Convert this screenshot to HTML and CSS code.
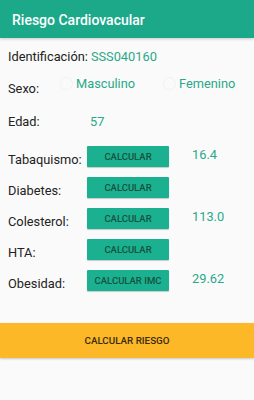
FILE: index.html
```html
<!DOCTYPE html>
<html lang="es">
  <head>
    <meta charset="UTF-8" />
    <title>Riesgo Cardiovacular</title>
    <link rel="stylesheet" href="styles.css">
  </head>
  <body>
    <div class="toolbar">Riesgo Cardiovacular</div>

    <div class="form">
      <div class="row row-id">
        <span class="label">Identificación:</span>
        <span class="value">SSS040160</span>
      </div>
      <div class="row row-sexo">
        <span class="label">Sexo:</span>
        <span class="radio"><span class="dot"></span>Masculino</span>
        <span class="radio"><span class="dot"></span>Femenino</span>
      </div>
      <div class="row row-edad">
        <span class="label">Edad:</span>
        <span class="value">57</span>
      </div>
      <div class="row row-btn row-first">
        <span class="label">Tabaquismo:</span>
        <button class="calc-btn">CALCULAR</button>
        <span class="result">16.4</span>
      </div>
      <div class="row row-btn">
        <span class="label">Diabetes:</span>
        <button class="calc-btn">CALCULAR</button>
        <span class="result"></span>
      </div>
      <div class="row row-btn">
        <span class="label">Colesterol:</span>
        <button class="calc-btn">CALCULAR</button>
        <span class="result">113.0</span>
      </div>
      <div class="row row-btn">
        <span class="label">HTA:</span>
        <button class="calc-btn">CALCULAR</button>
        <span class="result"></span>
      </div>
      <div class="row row-btn">
        <span class="label">Obesidad:</span>
        <button class="calc-btn">CALCULAR IMC</button>
        <span class="result">29.62</span>
      </div>
    </div>

    <button class="risk-btn">CALCULAR RIESGO</button>
  </body>
</html>
```

FILE: styles.css
```css
body {
  margin: 0;
  background: #fafafa;
  font-family: Roboto, "Noto Sans", sans-serif;
  color: #222;
  width: 254px;
  height: 400px;
  overflow: hidden;
}
.toolbar {
  background: #1ba98a;
  color: #fff;
  font-size: 14px;
  font-weight: 500;
  height: 38px;
  line-height: 41px;
  padding-left: 12px;
  box-shadow: 0 1px 3px rgba(0, 0, 0, 0.2);
}
.form {
  padding: 0 0 0 8px;
}
.row {
  display: flex;
  align-items: center;
  font-size: 12.8px;
}
.label {
  flex: none;
}
.row-id {
  height: 20px;
  margin-top: 8px;
}
.row-id .value {
  margin-left: 3px;
}
.value,
.result,
.radio {
  color: #2aa88a;
}
.row-sexo {
  height: 24px;
  margin-top: 5px;
}
.row-sexo .label {
  width: 52px;
  padding-top: 10px;
}
.radio {
  display: flex;
  align-items: center;
  flex: none;
  width: 103px;
}
.dot {
  width: 11px;
  height: 11px;
  border-radius: 50%;
  border: 1px solid #f2f2f2;
  margin-right: 3px;
}
.row-edad {
  height: 20px;
  margin-top: 16px;
}
.row-edad .label {
  width: 82px;
}
.row-btn {
  height: 21px;
  margin-top: 10px;
}
.row-first {
  margin-top: 15px;
}
.row-btn .label {
  width: 79px;
  padding-top: 5px;
}
.calc-btn {
  width: 82px;
  height: 21px;
  border: none;
  border-radius: 1px;
  background: #1ab090;
  color: #17503f;
  font-family: Roboto, sans-serif;
  font-size: 9.5px;
  font-weight: 500;
  padding: 0;
  box-shadow: 0 1px 1px rgba(0, 0, 0, 0.2);
}
.result {
  margin-left: 23px;
  margin-top: -4px;
}
.risk-btn {
  display: block;
  width: 254px;
  height: 35px;
  margin-top: 32px;
  border: none;
  background: #fcb826;
  color: #3a2a12;
  font-family: Roboto, sans-serif;
  font-size: 9.8px;
  font-weight: 500;
  box-shadow: 0 1px 2px rgba(0, 0, 0, 0.2);
}
```
